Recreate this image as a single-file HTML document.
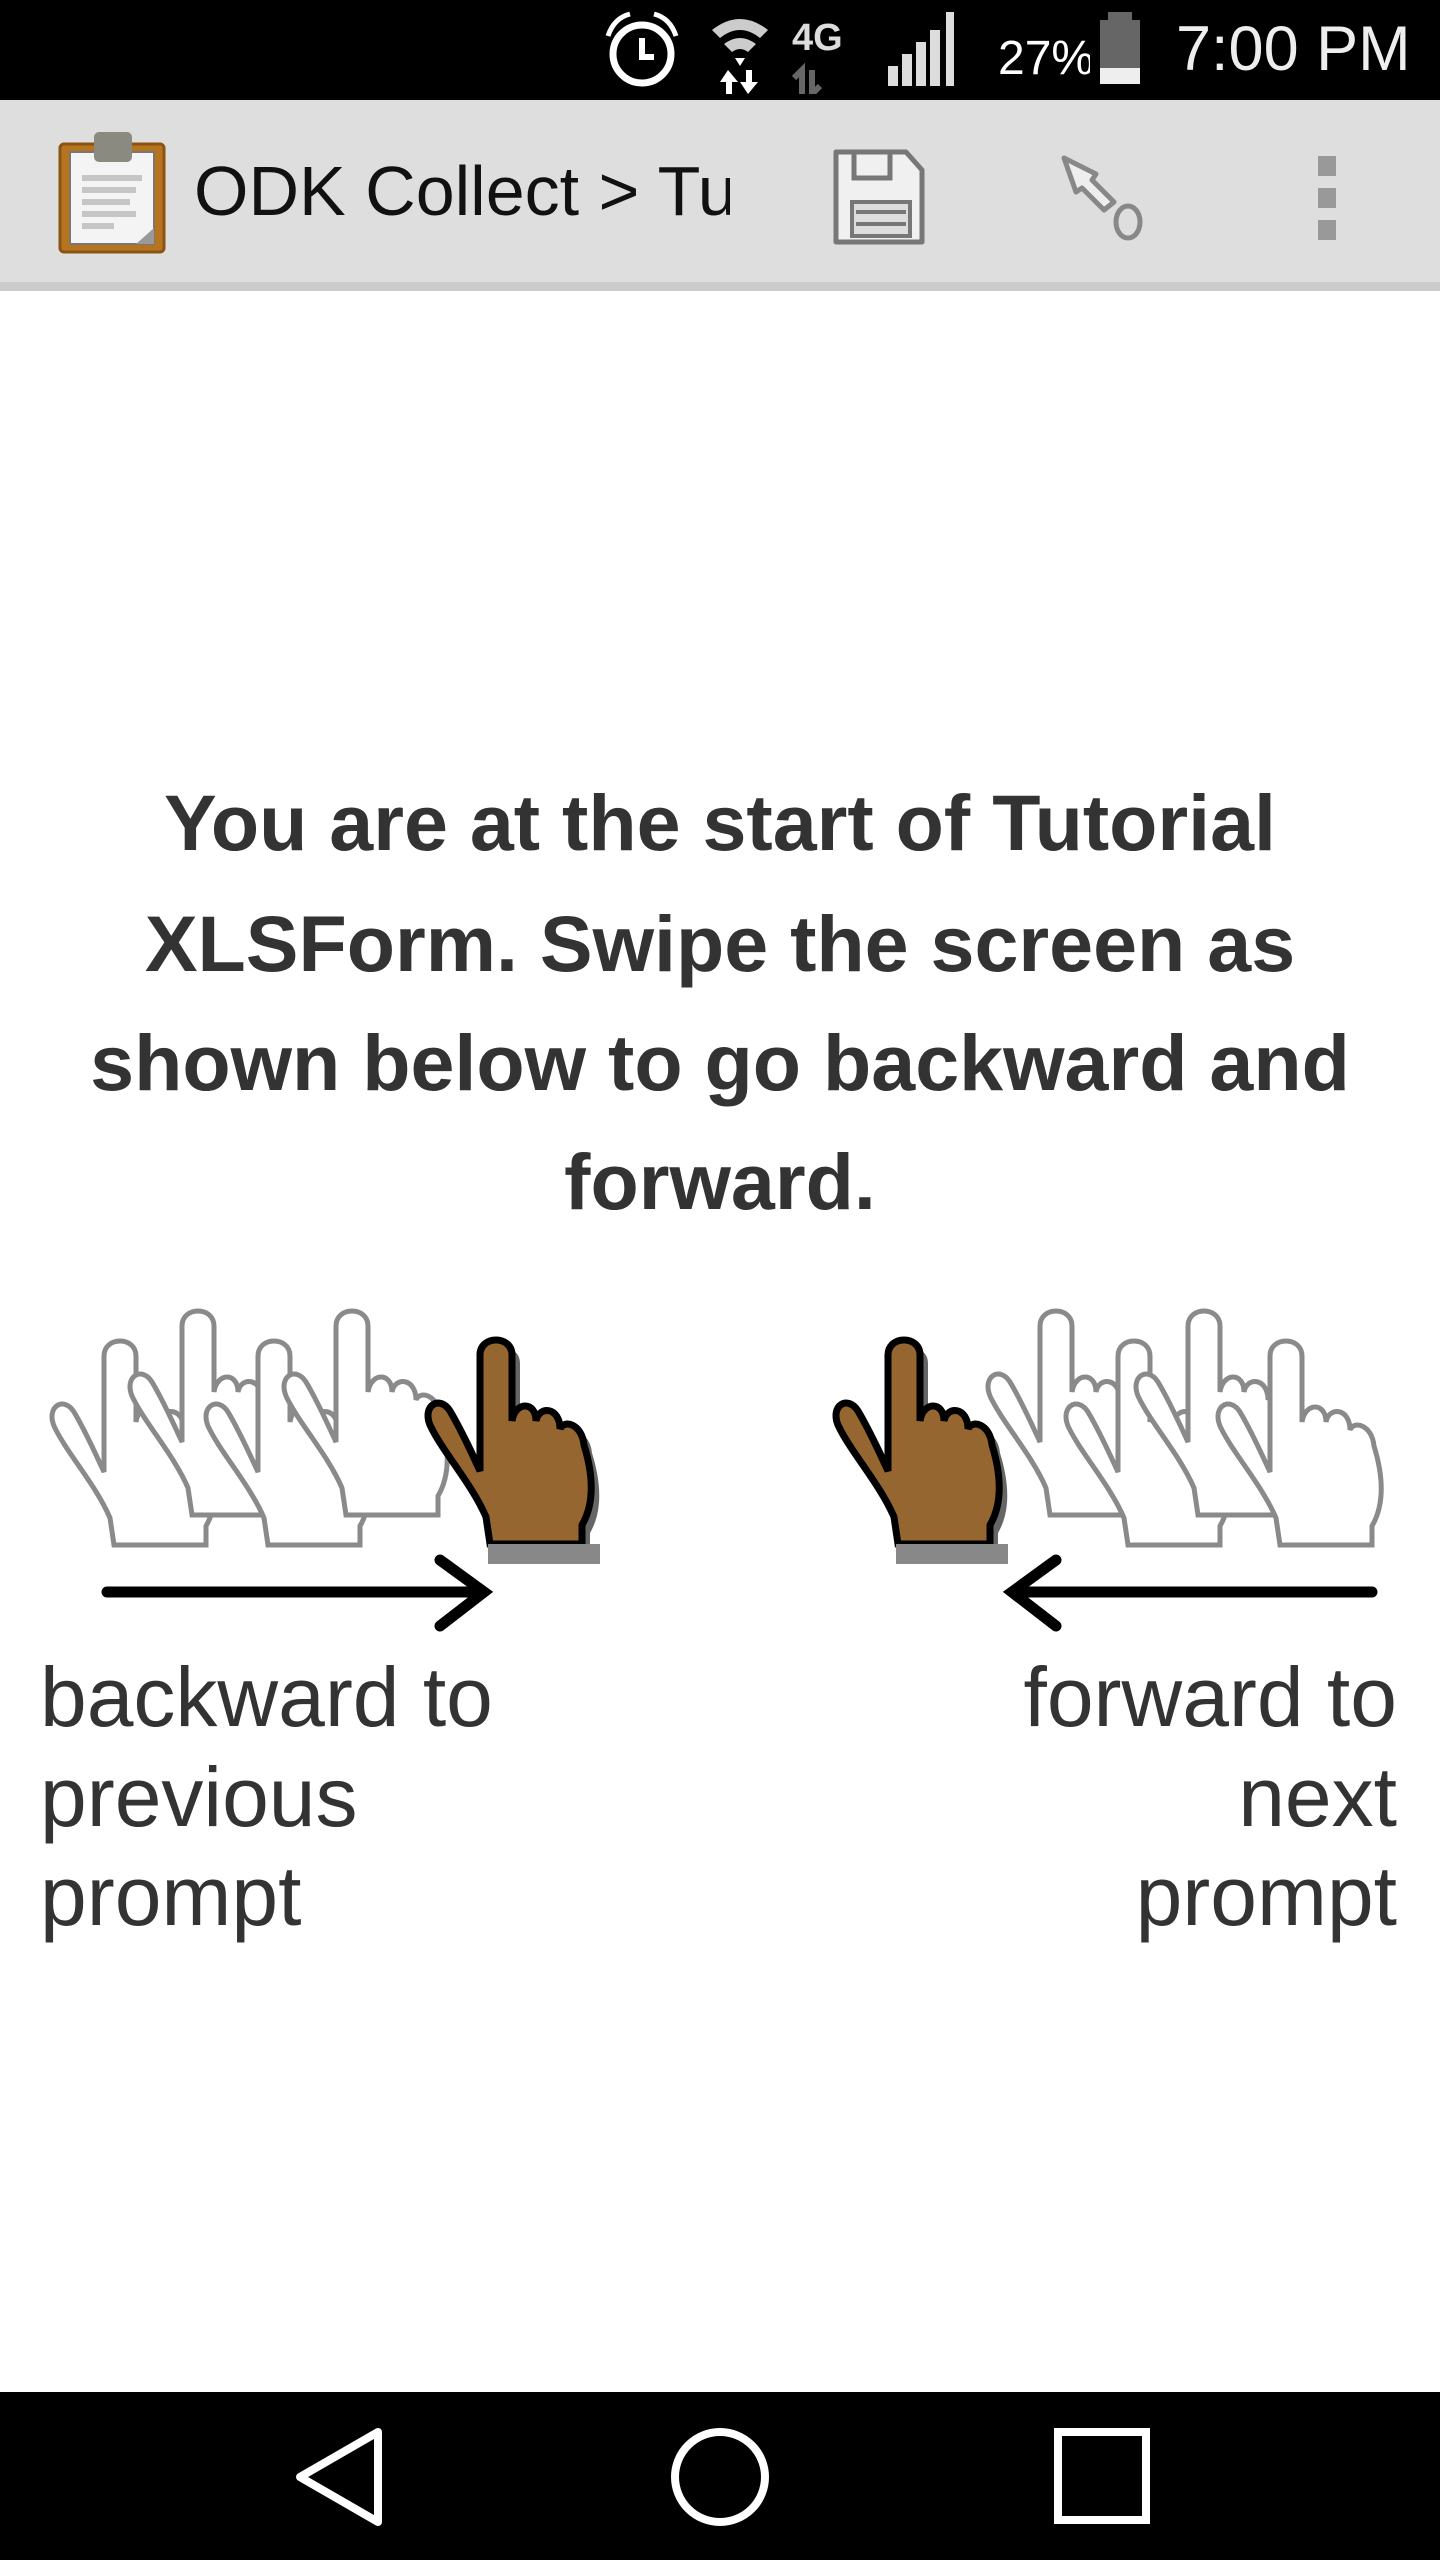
<!DOCTYPE html>
<html><head><meta charset="utf-8"><style>
html,body{margin:0;padding:0}
body{width:1440px;height:2560px;position:relative;background:#fff;overflow:hidden;font-family:"Liberation Sans",sans-serif}
.abs{position:absolute}
.h{position:absolute;left:0;width:1440px;text-align:center;font-weight:bold;color:#333;font-size:79px;white-space:nowrap;line-height:1}
.lab{position:absolute;font-size:84px;color:#333;line-height:1;white-space:nowrap}
</style></head><body>
<div class="abs" style="left:0;top:0;width:1440px;height:100px;background:#000"></div>
<svg class="abs" style="left:590px;top:8px" width="500" height="86" viewBox="0 0 500 86">
 <circle cx="52" cy="46" r="29" fill="none" stroke="#fff" stroke-width="7"/>
 <path d="M52 30 V49 H64" stroke="#fff" stroke-width="6" fill="none"/>
 <path d="M18 28 Q24 10 40 6 M86 28 Q80 10 64 6" stroke="#fff" stroke-width="5" fill="none"/>
 <path d="M122 22 Q150 0 178 22 L170 30 Q150 14 130 30Z M134 36 Q150 24 166 36 L158 44 Q150 38 142 44Z" fill="#ccc"/>
 <path d="M145 50 L155 50 L150 58Z" fill="#fff"/>
 <path d="M138 62 L130 74 H136 V86 H142 V74 H148Z M158 86 L150 74 H156 V62 H162 V74 H168Z" fill="#fff"/>
 <text x="202" y="42" font-family="Liberation Sans" font-weight="bold" font-size="38" fill="#ddd">4G</text>
 <path d="M212 86 V62 L204 70 M222 62 V86 L230 78" stroke="#666" stroke-width="6" fill="none"/>
 <path d="M312 78 H322 V46 H312Z M326 78 H336 V34 H326Z M340 78 H350 V22 H340Z M356 78 H364 V4 H356Z M298 78 H308 V58 H298Z" fill="#ddd"/>
 <text x="408" y="66" font-family="Liberation Sans" font-size="48" fill="#fff">27%</text>
</svg>
<div class="abs" style="left:1108px;top:12px;width:24px;height:10px;background:#666"></div>
<div class="abs" style="left:1100px;top:20px;width:40px;height:50px;background:#666"></div>
<div class="abs" style="left:1100px;top:68px;width:40px;height:16px;background:#eee"></div>
<div class="abs" style="left:1176px;top:18px;font-size:63px;color:#eee;line-height:1">7:00 PM</div>

<div class="abs" style="left:0;top:100px;width:1440px;height:186px;background:#dedede"></div>
<div class="abs" style="left:0;top:282px;width:1440px;height:9px;background:#cbcbcb"></div>
<svg class="abs" style="left:56px;top:128px" width="114" height="130" viewBox="0 0 114 130">
 <rect x="4" y="16" width="104" height="108" rx="4" fill="#b8731f" stroke="#8a5414" stroke-width="3"/>
 <rect x="14" y="24" width="84" height="92" fill="#f4f4f4" stroke="#777" stroke-width="2"/>
 <rect x="38" y="4" width="38" height="30" rx="5" fill="#8a8a80"/>
 <path d="M26 50 H86 M26 62 H80 M26 74 H74 M26 86 H80 M26 98 H58" stroke="#c6c6c6" stroke-width="6"/>
 <path d="M98 100 L80 116 H98Z" fill="#999"/>
</svg>
<div class="abs" style="left:194px;top:156px;width:536px;overflow:hidden;font-size:70px;color:#111;white-space:nowrap;line-height:1">ODK Collect &gt; Tut</div>
<svg class="abs" style="left:828px;top:146px" width="104" height="104" viewBox="0 0 104 104">
 <path d="M8 6 H78 L94 24 V96 H8Z" fill="#f0f0f0" stroke="#777" stroke-width="5" stroke-linejoin="round"/>
 <path d="M26 6 V32 H62 V6" fill="none" stroke="#777" stroke-width="5"/>
 <rect x="24" y="56" width="58" height="34" fill="#ddd" stroke="#777" stroke-width="4"/>
 <path d="M28 66 H78 M28 78 H78" stroke="#777" stroke-width="4"/>
</svg>
<svg class="abs" style="left:1056px;top:150px" width="100" height="100" viewBox="0 0 100 100">
 <path d="M8 8 L40 24 L36 30 L58 52 L48 60 L26 38 L20 42Z" fill="#eee" stroke="#888" stroke-width="5" stroke-linejoin="round"/>
 <ellipse cx="72" cy="72" rx="12" ry="16" fill="none" stroke="#888" stroke-width="5"/>
</svg>
<div class="abs" style="left:1318px;top:156px;width:18px;height:20px;background:#999"></div>
<div class="abs" style="left:1318px;top:188px;width:18px;height:20px;background:#999"></div>
<div class="abs" style="left:1318px;top:220px;width:18px;height:20px;background:#999"></div>

<div class="h" style="top:783px">You are at the start of Tutorial</div>
<div class="h" style="top:904px">XLSForm. Swipe the screen as</div>
<div class="h" style="top:1023px">shown below to go backward and</div>
<div class="h" style="top:1142px">forward.</div>

<svg class="abs" style="left:0;top:1300px" width="1440" height="360" viewBox="0 0 1440 360">
 <defs>
  <path id="hand" d="M70,205 L66,178 C52,145 22,112 10,86 C2,66 20,56 30,72 C42,92 52,115 60,132 L60,16 C60,-4 92,-4 92,16 L92,82 C95,62 116,62 116,82 C119,66 140,68 140,90 C144,80 162,85 164,106 C172,132 176,162 162,186 L162,205 Z"/>
 </defs>
 <g fill="#fff" stroke="#8a8a8a" stroke-width="5">
  <use href="#hand" x="44" y="40"/>
  <use href="#hand" x="122" y="10"/>
  <use href="#hand" x="198" y="40"/>
  <use href="#hand" x="276" y="10"/>
  <use href="#hand" x="980" y="10"/>
  <use href="#hand" x="1058" y="40"/>
  <use href="#hand" x="1128" y="10"/>
  <use href="#hand" x="1210" y="40"/>
 </g>
 <use href="#hand" x="428" y="47" fill="#666"/>
 <use href="#hand" x="420" y="39" fill="#956630" stroke="#000" stroke-width="7"/>
 <rect x="488" y="244" width="112" height="20" fill="#888"/>
 <use href="#hand" x="836" y="47" fill="#666"/>
 <use href="#hand" x="828" y="39" fill="#956630" stroke="#000" stroke-width="7"/>
 <rect x="896" y="244" width="112" height="20" fill="#888"/>
 <path d="M107 292 H484 M440 260 L484 292 L440 326" fill="none" stroke="#000" stroke-width="11" stroke-linecap="round"/>
 <path d="M1372 292 H1012 M1056 260 L1012 292 L1056 326" fill="none" stroke="#000" stroke-width="11" stroke-linecap="round"/>
</svg>

<div class="lab" style="left:40px;top:1655px">backward to</div>
<div class="lab" style="left:40px;top:1755px">previous</div>
<div class="lab" style="left:40px;top:1854px">prompt</div>
<div class="lab" style="right:43px;top:1655px;text-align:right">forward to</div>
<div class="lab" style="right:43px;top:1755px;text-align:right">next</div>
<div class="lab" style="right:43px;top:1854px;text-align:right">prompt</div>

<div class="abs" style="left:0;top:2392px;width:1440px;height:168px;background:#000"></div>
<svg class="abs" style="left:0;top:2392px" width="1440" height="168" viewBox="0 0 1440 168">
 <path d="M300 85 L378 40 V130 Z" fill="none" stroke="#fff" stroke-width="8" stroke-linejoin="round"/>
 <circle cx="720" cy="85" r="45" fill="none" stroke="#fff" stroke-width="8"/>
 <rect x="1058" y="40" width="88" height="88" fill="none" stroke="#fff" stroke-width="8"/>
</svg>
</body></html>
